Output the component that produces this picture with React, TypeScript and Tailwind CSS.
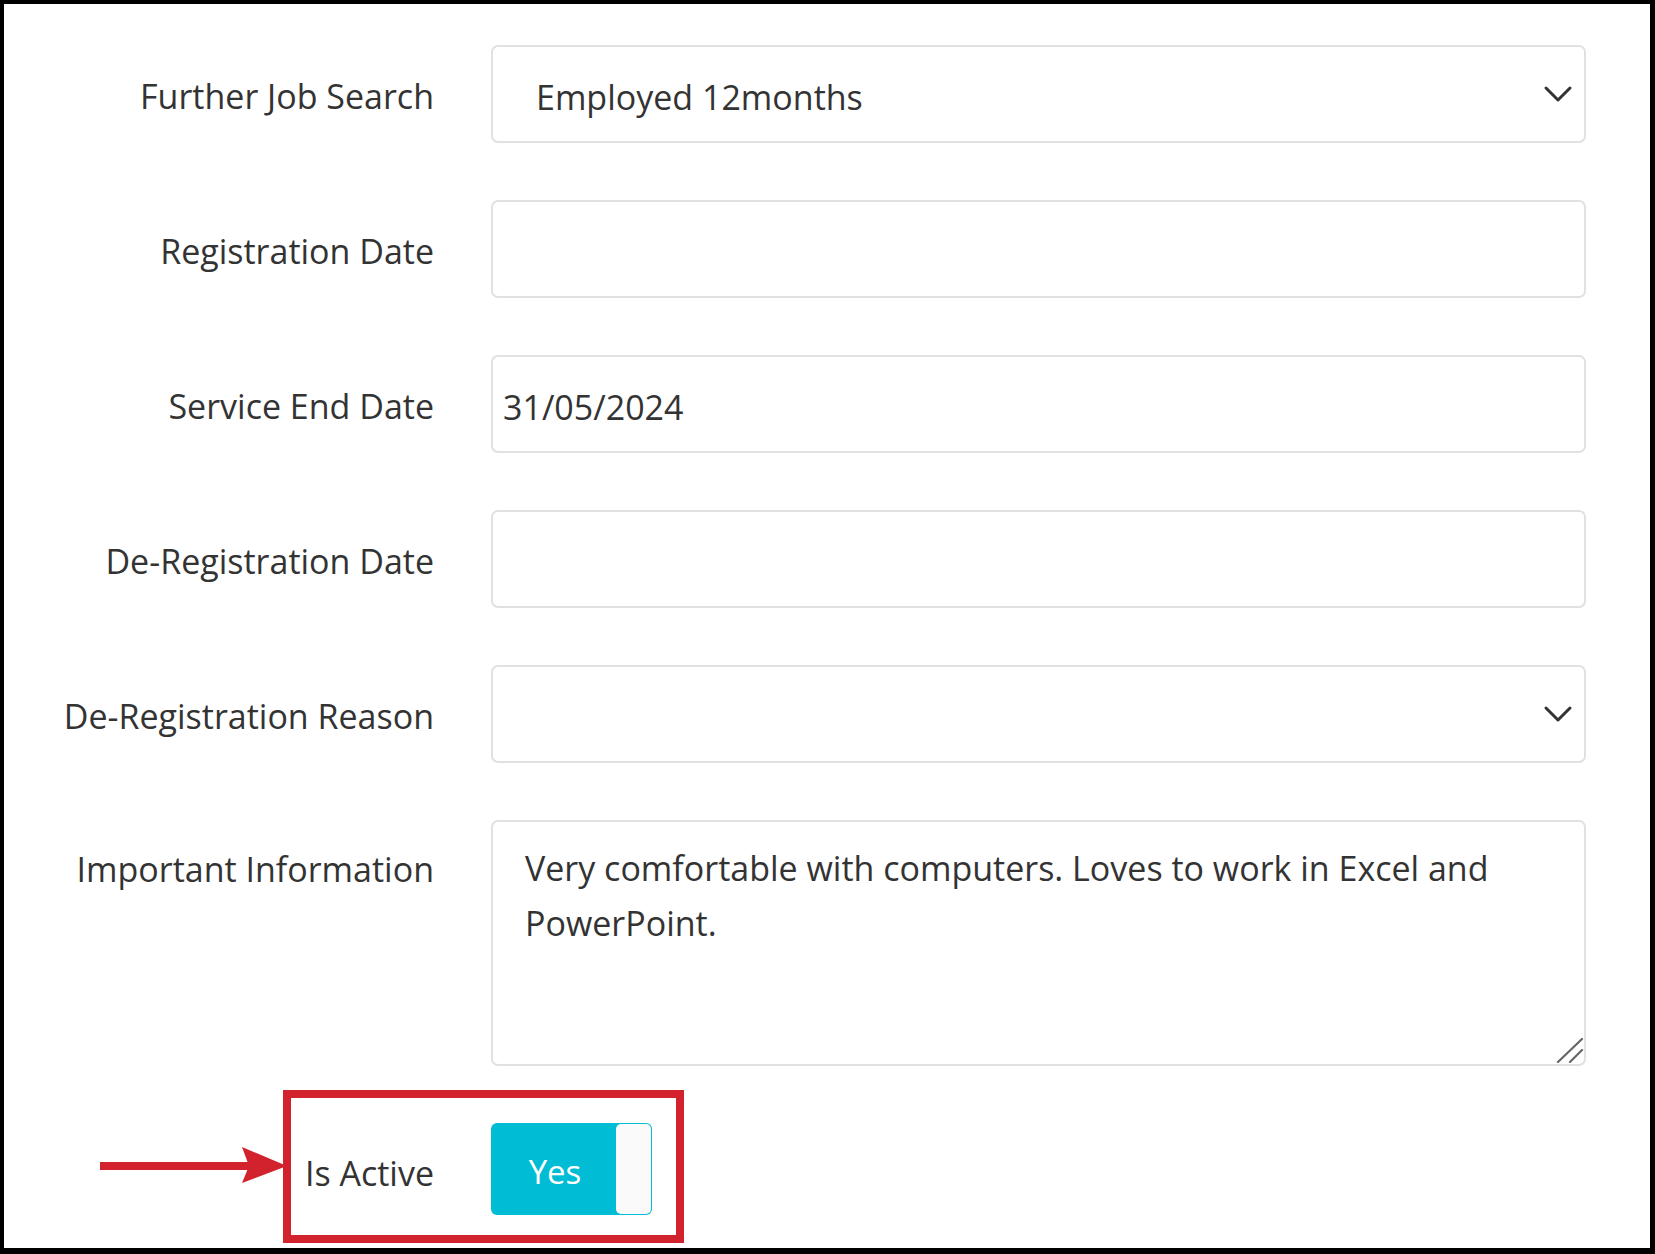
import React from "react";

const font = { fontFamily: '"Open Sans", "Noto Sans", sans-serif' };

function Chevron() {
  return (
    <svg width="30" height="18" viewBox="0 0 30 18" className="absolute right-[11px] top-1/2 -translate-y-1/2">
      <path d="M3 3 L15 15 L27 3" fill="none" stroke="#333" strokeWidth="3" strokeLinecap="round" strokeLinejoin="round" />
    </svg>
  );
}

function Row({ label, children, top = false }: { label: string; children: React.ReactNode; top?: boolean }) {
  return (
    <div className={`flex ${top ? "items-start" : "items-center"}`}>
      <div className={`w-[430px] shrink-0 text-right text-[34px] text-[#333] ${top ? "pt-[24px]" : "pt-[4px]"}`}>{label}</div>
      <div className="ml-[57px] flex-1">{children}</div>
    </div>
  );
}

function Box({ children, select = false, pl = "pl-[43px]" }: { children?: React.ReactNode; select?: boolean; pl?: string }) {
  return (
    <div className={`relative flex h-[98px] items-center rounded-[7px] border-2 border-[#e1e1e1] bg-white pt-[6px] ${pl} text-[34px] text-[#333]`}>
      {children}
      {select && <Chevron />}
    </div>
  );
}

export default function App() {
  return (
    <div
      style={font}
      className="relative box-border h-[1254px] w-[1655px] overflow-hidden border-t-4 border-l-4 border-r-[5px] border-b-[6px] border-black bg-white"
    >
      <div className="flex flex-col gap-[57px] pt-[41px] pr-[64px]">
        <Row label="Further Job Search">
          <Box select>Employed 12months</Box>
        </Row>
        <Row label="Registration Date">
          <Box />
        </Row>
        <Row label="Service End Date">
          <Box pl="pl-[10px]">31/05/2024</Box>
        </Row>
        <Row label="De-Registration Date">
          <Box />
        </Row>
        <Row label="De-Registration Reason">
          <Box select />
        </Row>
        <Row label="Important Information" top>
          <div className="relative">
            <textarea
              readOnly
              value="Very comfortable with computers. Loves to work in Excel and PowerPoint."
              className="block h-[246px] w-full resize-none rounded-[7px] border-2 border-[#e1e1e1] bg-white pl-[32px] pr-[20px] pt-[19px] text-[34px] leading-[55px] text-[#333] outline-none"
              style={font}
            />
            <svg className="absolute bottom-[3px] right-[2px]" width="28" height="26" viewBox="0 0 28 26">
              <path d="M2 25 L26 2" stroke="#666" strokeWidth="2.2" strokeLinecap="round" />
              <path d="M14 25 L26 13" stroke="#666" strokeWidth="2.2" strokeLinecap="round" />
            </svg>
          </div>
        </Row>
        <div className="flex items-center">
          <div className="w-[430px] shrink-0 pt-[8px] text-right text-[34px] text-[#333]">Is Active</div>
          <div className="ml-[57px] flex h-[92px] w-[161px] items-stretch rounded-[6px] bg-[#00bcd4] p-[1px]">
            <div className="flex flex-1 items-center justify-center pl-[2px] pt-[5px] text-[33px] text-white">Yes</div>
            <div className="w-[35px] rounded-[5px] bg-[#fafafa]" />
          </div>
        </div>
      </div>

      {/* annotation overlay: red box */}
      <div className="absolute left-[279px] top-[1086px] h-[153px] w-[401px] border-[8px] border-[#d2222d]" />
      {/* annotation overlay: arrow */}
      <svg className="absolute left-[92px] top-[1139px]" width="192" height="44" viewBox="0 0 192 44">
        <rect x="4" y="19" width="150" height="8" fill="#d2222d" />
        <path d="M146 4 L191 23 L146 40 L153 23 Z" fill="#d2222d" />
      </svg>
    </div>
  );
}
